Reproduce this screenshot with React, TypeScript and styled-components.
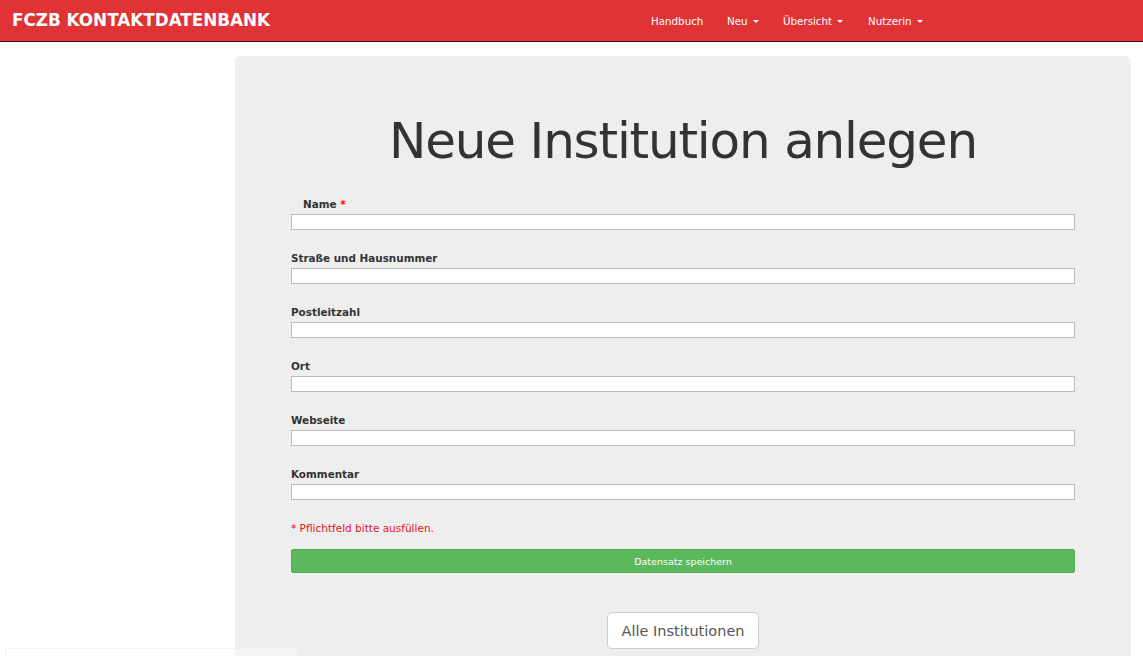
import React from "react";
import styled, { createGlobalStyle } from "styled-components";

const Global = createGlobalStyle`
  html, body { margin: 0; padding: 0; background: #fff; }
  body { font-family: "DejaVu Sans", Verdana, sans-serif; color: #333; overflow: hidden; }
  * { box-sizing: border-box; }
`;

const Navbar = styled.header`
  height: 42px;
  background: #df3335;
  border-bottom: 1px solid #3a1010;
  display: grid;
  grid-template-columns: 639px auto;
  align-items: center;
  padding: 0 12px;
`;

const Brand = styled.div`
  color: #fff;
  font-family: "DejaVu Sans", Verdana, sans-serif;
  font-weight: bold;
  font-size: 16.8px;
  margin-top: -1px;
`;

const NavList = styled.nav`
  display: flex;
`;

const NavItem = styled.span<{ $w: number }>`
  color: #fff;
  font-size: 10.3px;
  width: ${(p) => p.$w}px;
  display: flex;
  align-items: center;
  gap: 5px;
  margin-top: 1px;
`;

const Caret = styled.span`
  width: 0;
  height: 0;
  border-left: 3px solid transparent;
  border-right: 3px solid transparent;
  border-top: 3px solid #fff;
`;

const Main = styled.main`
  display: flex;
  padding: 14px 12px 0 235px;
`;

const Panel = styled.section`
  width: 896px;
  background: #eeeeee;
  border-radius: 6px;
  padding: 52px 56px 40px;
  display: flex;
  flex-direction: column;
  align-items: center;
`;

const Title = styled.h1`
  margin: 0 0 24px;
  font-weight: normal;
  font-size: 50px;
  letter-spacing: -1.2px;
  color: #333;
  line-height: 66px;
`;

const Form = styled.form`
  width: 100%;
  display: flex;
  flex-direction: column;
`;

const Field = styled.div`
  display: flex;
  flex-direction: column;
  margin-bottom: 22px;
`;

const Label = styled.label<{ $indent?: boolean }>`
  font-size: 10.4px;
  font-weight: bold;
  color: #333;
  height: 12px;
  line-height: 12px;
  padding-left: ${(p) => (p.$indent ? "12px" : "0")};
  margin-bottom: 4px;
`;

const Star = styled.span`
  color: #f00;
`;

const Input = styled.input`
  height: 16px;
  width: 100%;
  border: 1px solid #bbbbbb;
  background: #fff;
  margin: 0;
  padding: 0 2px;
`;

const Hint = styled.p`
  margin: 0 0 15px;
  font-size: 10.5px;
  color: #e8111b;
  line-height: 12px;
`;

const SaveButton = styled.button`
  height: 24px;
  width: 100%;
  background: #5cb85c;
  border: 1px solid #4cae4c;
  border-radius: 2px;
  color: #fff;
  font-family: "DejaVu Sans", Verdana, sans-serif;
  font-size: 9.5px;
  padding: 0;
`;

const BackButton = styled.button`
  margin-top: 39px;
  height: 37px;
  padding: 0 13px;
  background: #fff;
  border: 1px solid #ccc;
  border-radius: 5px;
  color: #555;
  font-family: "DejaVu Sans", Verdana, sans-serif;
  font-size: 14.5px;
`;

const Faint = styled.div`
  position: fixed;
  left: 5px;
  bottom: -12px;
  width: 293px;
  height: 20px;
  border: 1px solid #f0f0f0;
  background: rgba(255, 255, 255, 0.4);
`;

const fields = [
  { label: "Name", required: true },
  { label: "Straße und Hausnummer" },
  { label: "Postleitzahl" },
  { label: "Ort" },
  { label: "Webseite" },
  { label: "Kommentar" },
];

export default function App() {
  return (
    <>
      <Global />
      <Navbar>
        <Brand>FCZB KONTAKTDATENBANK</Brand>
        <NavList>
          <NavItem $w={76}>Handbuch</NavItem>
          <NavItem $w={56}>
            Neu <Caret />
          </NavItem>
          <NavItem $w={85}>
            Übersicht <Caret />
          </NavItem>
          <NavItem $w={70}>
            Nutzerin <Caret />
          </NavItem>
        </NavList>
      </Navbar>
      <Main>
        <Panel>
          <Title>Neue Institution anlegen</Title>
          <Form onSubmit={(e) => e.preventDefault()}>
            {fields.map((f) => (
              <Field key={f.label}>
                <Label $indent={f.required}>
                  {f.label} {f.required && <Star>*</Star>}
                </Label>
                <Input type="text" />
              </Field>
            ))}
            <Hint>
              <Star>*</Star> Pflichtfeld bitte ausfüllen.
            </Hint>
            <SaveButton type="submit">Datensatz speichern</SaveButton>
          </Form>
          <BackButton type="button">Alle Institutionen</BackButton>
        </Panel>
      </Main>
      <Faint />
    </>
  );
}
